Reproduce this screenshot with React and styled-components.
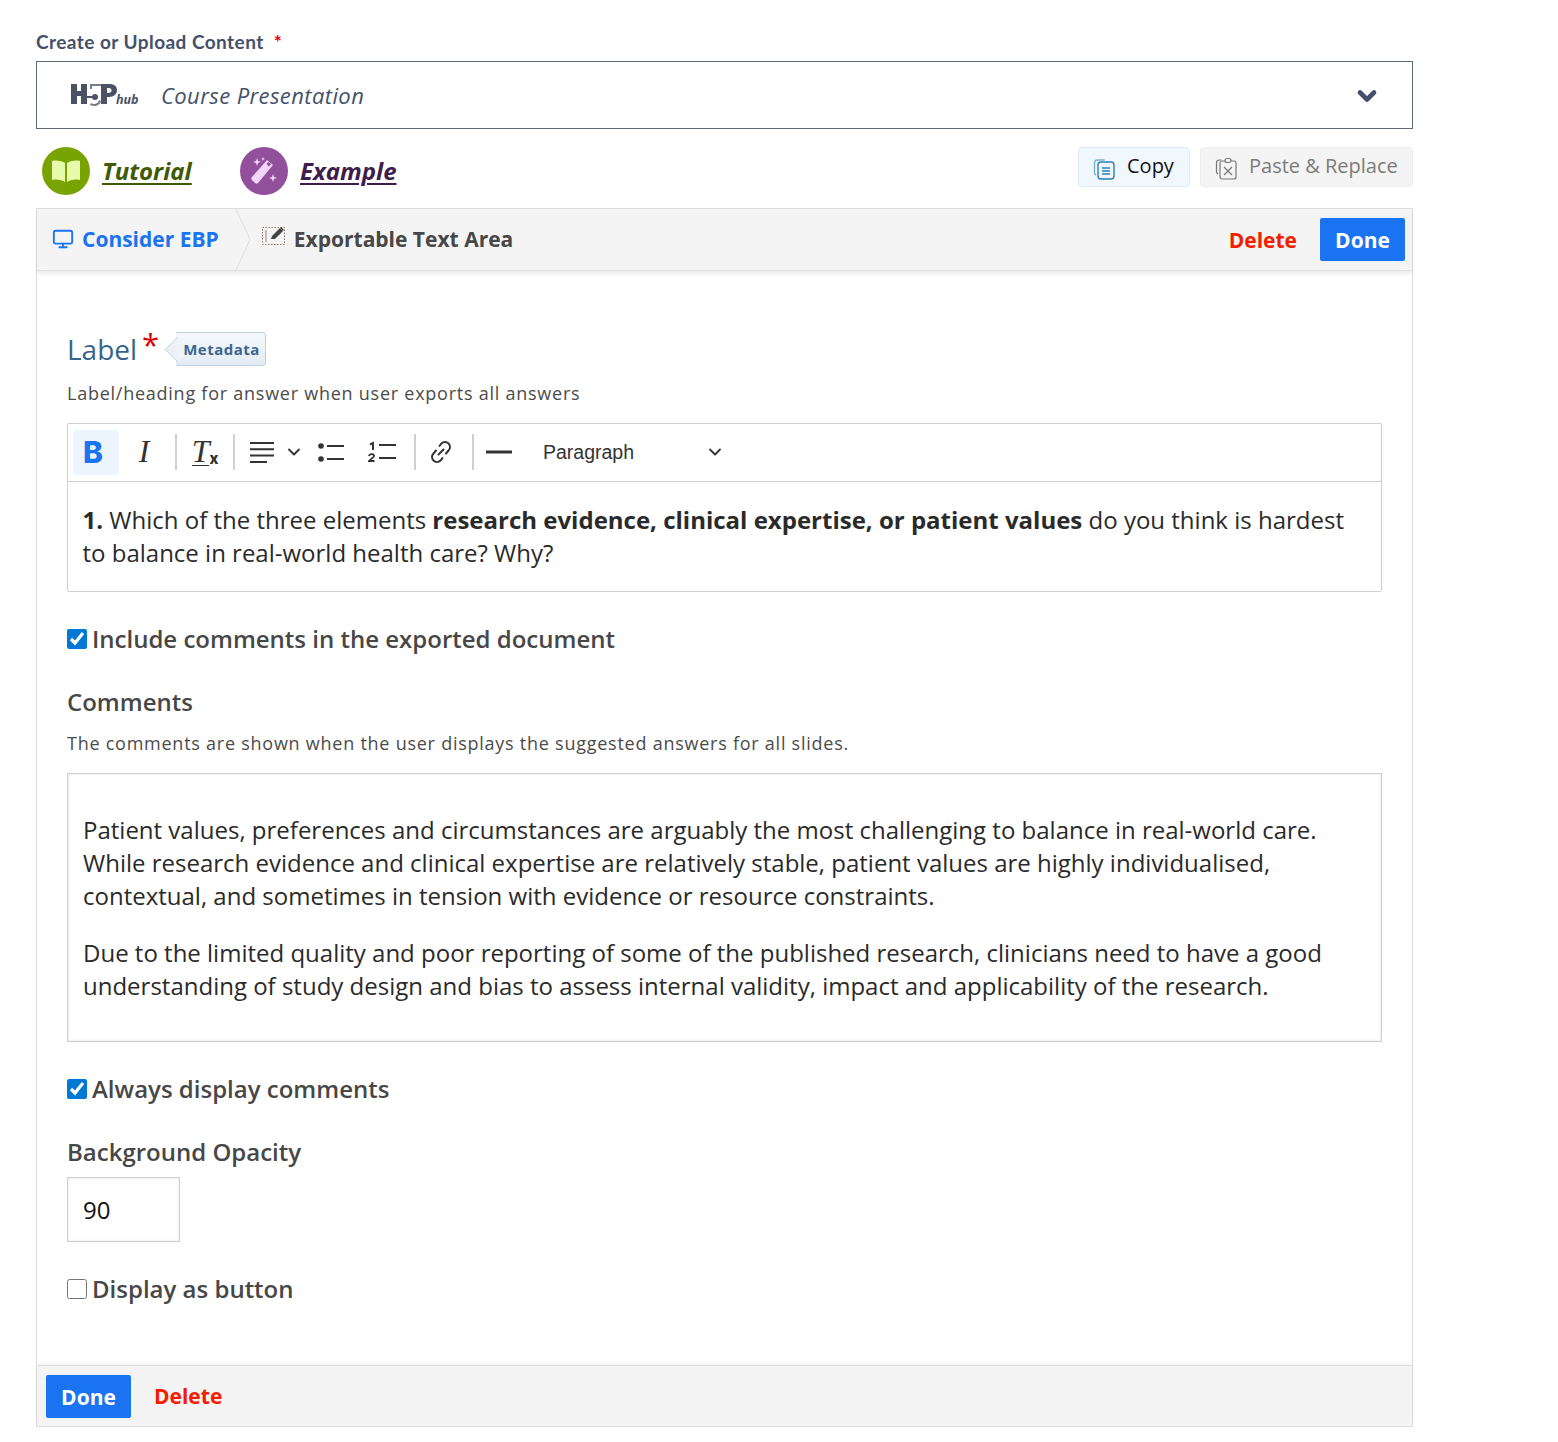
import React from 'react';
import styled, { createGlobalStyle } from 'styled-components';
import { ChevronDown, Monitor } from 'lucide-react';

const GlobalStyle = createGlobalStyle`
  body {
    margin: 0;
    background: #fff;
    font-family: "Open Sans", "Liberation Sans", sans-serif;
    color: #474747;
  }
`;

const Page = styled.div`
  width: 1377px;
  height: 1411px;
  padding: 31px 0 0 36px;
  box-sizing: content-box;
`;

const TopLabel = styled.div`
  height: 22px;
  line-height: 22px;
  font-family: Lato, "Noto Sans", sans-serif;
  font-size: 19px;
  letter-spacing: 0.45px;
  font-weight: 700;
  color: #44506a;
  margin-bottom: 8px;

  span {
    color: #e00;
    margin-left: 10px;
  }
`;

const Selector = styled.div`
  height: 68px;
  box-sizing: border-box;
  border: 1px solid #5d6b7d;
  display: flex;
  align-items: center;
  padding: 0 31px 0 34px;
`;

const LogoMark = styled.div`
  display: flex;
  align-items: flex-end;
  width: 90px;
  height: 26px;
  color: #4a5264;
  margin-top: -3px;

  span {
    font-style: italic;
    font-weight: 700;
    font-size: 12.500px;
    line-height: 14px;
    margin-left: -1px;
  }
`;

const SelectorTitle = styled.div`
  flex: 1;
  font-style: italic;
  font-size: 22px;
  letter-spacing: 0.4px;
  color: #44506a;
`;

const SelectorChevron = styled(ChevronDown)`
  margin-top: 2px;
`;

const LinkRow = styled.div`
  height: 79px;
  display: flex;
  align-items: flex-start;
  padding-top: 18px;
  box-sizing: border-box;
`;

const Resource = styled.a`
  display: flex;
  align-items: center;
  gap: 12px;
  margin-left: ${(p) => p.$offset}px;
  width: ${(p) => p.$width}px;
  font-style: italic;
  font-weight: 700;
  font-size: 24px;
  color: ${(p) => p.$color};
`;

const ResourceLabel = styled.span`
  text-decoration: underline;
  text-decoration-thickness: 2px;
  text-underline-offset: 3px;
  margin-top: -2px;
`;

const Round = styled.div`
  width: 48px;
  height: 48px;
  border-radius: 50%;
  background: ${(p) => p.$bg};
  display: flex;
  align-items: center;
  justify-content: center;
  flex-shrink: 0;
`;

const CopyGroup = styled.div`
  margin-left: auto;
  display: flex;
  gap: 10px;
`;

const CopyButton = styled.div`
  height: 40px;
  box-sizing: border-box;
  display: flex;
  align-items: center;
  gap: 11px;
  padding: 0 14px 4px;
  border-radius: 4px;
  white-space: nowrap;
  width: ${(p) => p.$width}px;
  font-size: 20px;
  border: 1px solid ${(p) => (p.$muted ? '#eeeeee' : '#dfedf5')};
  background: ${(p) => (p.$muted ? '#f4f4f4' : '#f1f8fd')};
  color: ${(p) => (p.$muted ? '#7b7b7b' : '#111')};

  svg {
    margin-top: 6px;
    flex-shrink: 0;
  }
`;

const Panel = styled.div`
  border: 1px solid #dddddd;
  height: 1219px;
  box-sizing: border-box;
  display: flex;
  flex-direction: column;
`;

const TopBar = styled.div`
  height: 61px;
  flex-shrink: 0;
  background: #f4f4f4;
  border-bottom: 1px solid #dedede;
  box-shadow: 0 3px 4px rgba(0, 0, 0, 0.07);
  display: flex;
  align-items: center;
  padding: 0 7px 0 15px;
  position: relative;
`;

const Crumb = styled.div`
  display: flex;
  align-items: center;
  padding-bottom: 2px;
  font-size: 21px;
  font-weight: 700;
  color: ${(p) => p.$color};
`;

const CrumbSep = styled.svg`
  width: 16px;
  height: 61px;
  margin: 0 11px 0 16px;
  flex-shrink: 0;
`;

const BarActions = styled.div`
  margin-left: auto;
  display: flex;
  align-items: center;
  gap: 23px;
`;

const DeleteLink = styled.span`
  color: #f51c00;
  font-size: 21px;
  font-weight: 700;
  padding-bottom: ${(p) => p.$lift || 0}px;
`;

const DoneButton = styled.div`
  width: 85px;
  height: 43px;
  background: #1a73f0;
  border-radius: 2px;
  color: #fff;
  font-size: 21px;
  font-weight: 700;
  display: flex;
  align-items: center;
  justify-content: center;
`;

const Body = styled.div`
  flex: 1;
  padding: 60px 30px 0;
`;

const LabelRow = styled.div`
  display: flex;
  align-items: flex-start;
  height: 36px;
`;

const LabelTitle = styled.div`
  font-size: 28px;
  line-height: 36px;
  color: #36648f;
`;

const Star = styled.span`
  color: #d00;
  font-size: 31px;
  line-height: 26px;
  margin: 0 7px 0 5px;
`;

const MetaTag = styled.div`
  position: relative;
  height: 34px;
  width: 90px;
  margin: 1px 0 0 10px;
  padding-left: 7px;
  box-sizing: border-box;
  display: flex;
  align-items: center;
  border: 1px solid #bcd0e1;
  border-left: none;
  border-radius: 0 4px 4px 0;
  background: linear-gradient(#f6f9fb, #e2ebf3);
  color: #3b6690;
  font-size: 15px;
  font-weight: 700;
  letter-spacing: 0.5px;

  &::before {
    content: '';
    position: absolute;
    left: -11px;
    top: 4px;
    width: 24px;
    height: 24px;
    transform: rotate(45deg) scale(0.72);
    border-left: 1px solid #bcd0e1;
    border-bottom: 1px solid #bcd0e1;
    background: linear-gradient(45deg, #e8eff5, #f4f7fa);
  }
`;

const MetaText = styled.span`
  position: relative;
  z-index: 1;
`;

const Hint = styled.div`
  font-size: 18px;
  line-height: 24px;
  letter-spacing: 0.75px;
  color: #4b4b4b;
  margin-top: ${(p) => p.$top}px;
  margin-bottom: ${(p) => p.$bottom}px;
`;

const Editor = styled.div`
  border: 1px solid #cfcfcf;
  border-radius: 2px;
  height: 169px;
  box-sizing: border-box;
`;

const Toolbar = styled.div`
  height: 56px;
  padding: 0 0 1px 5px;
  border-bottom: 1px solid #cfcfcf;
  display: flex;
  align-items: center;
`;

const ToolButton = styled.div`
  width: ${(p) => p.$w || 46}px;
  height: 45px;
  border-radius: 3px;
  display: flex;
  align-items: center;
  justify-content: center;
  flex-shrink: 0;
  background: ${(p) => (p.$active ? '#edf5ff' : 'transparent')};
  color: #333;
`;

const BoldGlyph = styled.span`
  font-family: Inter, "Liberation Sans", sans-serif;
  font-weight: 800;
  font-size: 30px;
  color: #1a73f0;
  margin-right: 6px;
`;

const SerifGlyph = styled.span`
  font-family: "Liberation Serif", serif;
  font-style: italic;
  font-size: 32px;
  color: #333;
  padding-bottom: 1px;
  border-bottom: ${(p) => (p.$under ? '1.5px solid #333' : 'none')};
  line-height: 25px;
`;

const SmallX = styled.span`
  font-family: Inter, sans-serif;
  font-weight: 800;
  font-size: 15px;
  color: #333;
  margin-top: 12px;
`;

const ToolSep = styled.div`
  width: 2px;
  height: 36px;
  background: #d0d0d4;
  margin-left: ${(p) => p.$left || 0}px;
  flex-shrink: 0;
`;

const ToolChevron = styled(ChevronDown)`
  margin: 0 14px 0 -5px;
  flex-shrink: 0;
`;

const ListIcon = styled.svg`
  margin-right: 10px;
  flex-shrink: 0;
`;

const FormatSelect = styled.div`
  width: 182px;
  display: flex;
  align-items: center;
  justify-content: space-between;
  font-family: "Liberation Sans", Arial, sans-serif;
  font-size: 19.500px;
  color: #333;
  margin-left: 19px;
`;

const EditorText = styled.div`
  padding: 21px 14.500px 0;
  font-size: 24px;
  line-height: 33px;
  color: #2a2a2a;

  strong {
    font-weight: 700;
  }
`;

const CheckRow = styled.label`
  display: flex;
  align-items: center;
  gap: 5px;
  font-size: 24px;
  font-weight: 600;
  line-height: 32px;
  color: #474747;
  margin-top: ${(p) => p.$top}px;

  input {
    width: 20px;
    height: 20px;
    margin: 0;
    accent-color: #0078d4;
  }
`;

const FieldTitle = styled.div`
  font-size: 24px;
  font-weight: 600;
  line-height: 32px;
  color: #474747;
  margin-top: ${(p) => p.$top}px;
`;

const CommentBox = styled.div`
  height: 269px;
  box-sizing: border-box;
  border: 1px solid #cfcfcf;
  box-shadow: inset 0 0 3px rgba(0, 0, 0, 0.12);
  padding: 39px 15px 0;
  font-size: 24px;
  line-height: 33px;
  color: #2a2a2a;

  p {
    margin: 0 0 24px;
  }
`;

const NumberInput = styled.div`
  width: 113px;
  height: 65px;
  margin-top: 9px;
  box-sizing: border-box;
  border: 1px solid #cfcfcf;
  box-shadow: inset 0 0 3px rgba(0, 0, 0, 0.1);
  display: flex;
  align-items: center;
  padding-left: 15px;
  font-size: 24px;
  color: #111;
`;

const BottomBar = styled.div`
  height: 59px;
  padding: 1px 0 0 9px;
  flex-shrink: 0;
  background: #f4f4f4;
  border-top: 1px solid #dedede;
  box-shadow: 0 -3px 4px rgba(0, 0, 0, 0.04);
  display: flex;
  align-items: center;
  gap: 23px;
`;

const H5pLogo = () => (
  <svg width="46" height="24" viewBox="0 0 46 24" fill="currentColor">
    <rect x="0" y="1" width="6" height="20" />
    <rect x="10" y="1" width="6" height="20" />
    <rect x="4" y="8" width="8" height="5" />
    <circle cx="24" cy="14" r="3" />
    <rect x="15" y="13" width="8" height="2" />
    <path d="M19 1h11v2h-9v3h-2z" opacity="0.75" />
    <path d="M20 20c3 2 7 1 8-3l2 1c-1 5-7 6-11 4z" opacity="0.75" />
    <path fillRule="evenodd" d="M30 1h8c5 0 8 2 8 6s-3 7-8 7h-2v7h-6zm6 4v5h1.500c2 0 3-1 3-2.500s-1-2.500-3-2.500z" />
  </svg>
);

const BookIcon = () => (
  <svg width="30" height="24" viewBox="0 0 30 24">
    <path d="M1 2c5-1 10 0 13 2v19c-3-2-8-3-13-2z" fill="#e6fbac" />
    <path d="M29 2c-5-1-10 0-13 2v19c3-2 8-3 13-2z" fill="#e6fbac" />
  </svg>
);

const WandIcon = () => (
  <svg width="28" height="28" viewBox="0 0 28 28" fill="#f2d5fb">
    <path d="M17 3l6 5-15 18c-1 1-2 1-3 0l-3-3c-1-1-1-2 0-3z" />
    <path d="M16.500 7l2-2 2.500 2-2 2.500z" fill="#8e4f9b" />
    <path d="M7 1l1 3 3 1-3 1-1 3-1-3-3-1 3-1z" />
    <path d="M13 0l.6 1.500 1.400.5-1.400.5-.6 1.500-.6-1.500-1.400-.5 1.400-.5z" />
    <path d="M23 17l1 3 3 1-3 1-1 3-1-3-3-1 3-1z" />
  </svg>
);

const CopyIcon = () => (
  <svg width="23" height="23" viewBox="0 0 23 23" fill="none" stroke="#2a80b9" strokeWidth="1.400">
    <path d="M3 18c-1-.5-1.500-1-1.500-2V6c0-2 1-3 3-3h7" opacity="0.6" />
    <rect x="5" y="5" width="16" height="17" rx="3" />
    <path d="M9 11h8M9 14h8M9 17h8" />
  </svg>
);

const PasteIcon = () => (
  <svg width="23" height="24" viewBox="0 0 23 24" fill="none" stroke="#777" strokeWidth="1.200">
    <path d="M3 18c-1-.5-1.500-1-1.500-2V7c0-2 1-3 3-3h2" />
    <rect x="5" y="5" width="16" height="18" rx="2" />
    <rect x="10" y="2.500" width="6" height="4" rx="2" fill="#f4f4f4" />
    <path d="M9 11l8 8M17 11l-8 8" />
  </svg>
);

const TextAreaIcon = () => (
  <svg width="25" height="20" viewBox="0 0 25 20" style={{ marginRight: 7, marginTop: -4 }}>
    <rect x="0.500" y="0.500" width="22" height="17" fill="none" stroke="#8a7a68" strokeDasharray="1.500 1.500" />
    <path d="M4 3v12" stroke="#999" strokeWidth="1.200" />
    <path d="M9 12l1-3 8-8 3 3-8 8z" fill="#444" />
    <path d="M18 1l1-1 3 3-1 1z" fill="#444" />
  </svg>
);

const AlignIcon = () => (
  <svg width="25" height="23" viewBox="0 0 25 23" stroke="#333" strokeWidth="2">
    <path d="M0 2h24M0 8.300h24M0 14.600h24M0 21h17" />
  </svg>
);

const BulletIcon = () => (
  <ListIcon width="27" height="19" viewBox="0 0 27 19">
    <circle cx="3" cy="3" r="2.800" fill="#333" />
    <circle cx="3" cy="16" r="2.800" fill="#333" />
    <path d="M9 3h17M9 16h17" stroke="#333" strokeWidth="2" />
  </ListIcon>
);

const NumberedIcon = () => (
  <svg width="29" height="22" viewBox="0 0 29 22">
    <path d="M2 3.500l3-1.500v7" stroke="#333" strokeWidth="2" fill="none" />
    <path d="M1 15c.5-2.500 5-2.500 5 0 0 1.500-3.500 3-5 5h5.500" stroke="#333" strokeWidth="1.800" fill="none" />
    <path d="M11 4h17M11 17h17" stroke="#333" strokeWidth="2" />
  </svg>
);

const LinkIcon = () => (
  <svg width="24" height="24" viewBox="0 0 24 24" fill="none" stroke="#333" strokeWidth="2" strokeLinecap="round">
    <path d="M10.500 6l2-2.500c2-2 5-2 7 0s2 5 0 7l-2.500 3" />
    <path d="M13.500 18l-2 2.500c-2 2-5 2-7 0s-2-5 0-7l2.500-3" />
    <path d="M9.500 14.500l5-5" />
  </svg>
);

const App = () => (
  <Page>
    <GlobalStyle />
    <TopLabel>
      Create or Upload Content<span>*</span>
    </TopLabel>
    <Selector>
      <LogoMark>
        <H5pLogo />
        <span>hub</span>
      </LogoMark>
      <SelectorTitle>Course Presentation</SelectorTitle>
      <SelectorChevron size={28} strokeWidth={4} color="#44506a" />
    </Selector>
    <LinkRow>
      <Resource $offset={6} $width={198} $color="#3f5a00">
        <Round $bg="#79a300">
          <BookIcon />
        </Round>
        <ResourceLabel>Tutorial</ResourceLabel>
      </Resource>
      <Resource $offset={0} $width={200} $color="#3e1c4e">
        <Round $bg="#924f9c">
          <WandIcon />
        </Round>
        <ResourceLabel>Example</ResourceLabel>
      </Resource>
      <CopyGroup>
        <CopyButton $width={112}>
          <CopyIcon />
          Copy
        </CopyButton>
        <CopyButton $width={213} $muted>
          <PasteIcon />
          Paste &amp; Replace
        </CopyButton>
      </CopyGroup>
    </LinkRow>
    <Panel>
      <TopBar>
        <Crumb $color="#1a73f0">
          <Monitor size={22} strokeWidth={2} style={{ marginRight: 8 }} />
          Consider EBP
        </Crumb>
        <CrumbSep viewBox="0 0 16 61">
          <path d="M1 0l14 30.500L1 61" fill="none" stroke="#dedede" />
        </CrumbSep>
        <Crumb $color="#474747">
          <TextAreaIcon />
          Exportable Text Area
        </Crumb>
        <BarActions>
          <DeleteLink>Delete</DeleteLink>
          <DoneButton>Done</DoneButton>
        </BarActions>
      </TopBar>
      <Body>
        <LabelRow>
          <LabelTitle>Label</LabelTitle>
          <Star>*</Star>
          <MetaTag>
            <MetaText>Metadata</MetaText>
          </MetaTag>
        </LabelRow>
        <Hint $top={14} $bottom={18}>
          Label/heading for answer when user exports all answers
        </Hint>
        <Editor>
          <Toolbar>
            <ToolButton $active>
              <BoldGlyph>B</BoldGlyph>
            </ToolButton>
            <ToolButton $w={50}>
              <SerifGlyph>I</SerifGlyph>
            </ToolButton>
            <ToolSep $left={6} />
            <ToolButton $w={56}>
              <SerifGlyph $under>T</SerifGlyph>
              <SmallX>x</SmallX>
            </ToolButton>
            <ToolSep />
            <ToolButton $w={54}>
              <AlignIcon />
            </ToolButton>
            <ToolChevron size={20} strokeWidth={2.2} color="#333" />
            <BulletIcon />
            <ToolButton $w={55}>
              <NumberedIcon />
            </ToolButton>
            <ToolSep $left={4} />
            <ToolButton $w={50}>
              <LinkIcon />
            </ToolButton>
            <ToolSep $left={6} />
            <ToolButton $w={50}>
              <svg width="26" height="4" viewBox="0 0 26 4">
                <path d="M0 2h26" stroke="#333" strokeWidth="3" />
              </svg>
            </ToolButton>
            <FormatSelect>
              Paragraph
              <ChevronDown size={20} strokeWidth={2.2} color="#333" />
            </FormatSelect>
          </Toolbar>
          <EditorText>
            <strong>1.</strong> Which of the three elements{' '}
            <strong>research evidence, clinical expertise, or patient values</strong> do you think is hardest to
            balance in real-world health care? Why?
          </EditorText>
        </Editor>
        <CheckRow $top={31}>
          <input type="checkbox" defaultChecked />
          Include comments in the exported document
        </CheckRow>
        <FieldTitle $top={31}>Comments</FieldTitle>
        <Hint $top={13} $bottom={18}>
          The comments are shown when the user displays the suggested answers for all slides.
        </Hint>
        <CommentBox>
          <p>
            Patient values, preferences and circumstances are arguably the most challenging to balance in real-world
            care. While research evidence and clinical expertise are relatively stable, patient values are highly
            individualised, contextual, and sometimes in tension with evidence or resource constraints.
          </p>
          <p>
            Due to the limited quality and poor reporting of some of the published research, clinicians need to have a
            good understanding of study design and bias to assess internal validity, impact and applicability of the
            research.
          </p>
        </CommentBox>
        <CheckRow $top={31}>
          <input type="checkbox" defaultChecked />
          Always display comments
        </CheckRow>
        <FieldTitle $top={31}>Background Opacity</FieldTitle>
        <NumberInput>90</NumberInput>
        <CheckRow $top={31}>
          <input type="checkbox" />
          Display as button
        </CheckRow>
      </Body>
      <BottomBar>
        <DoneButton>Done</DoneButton>
        <DeleteLink $lift={2}>Delete</DeleteLink>
      </BottomBar>
    </Panel>
  </Page>
);

export default App;
